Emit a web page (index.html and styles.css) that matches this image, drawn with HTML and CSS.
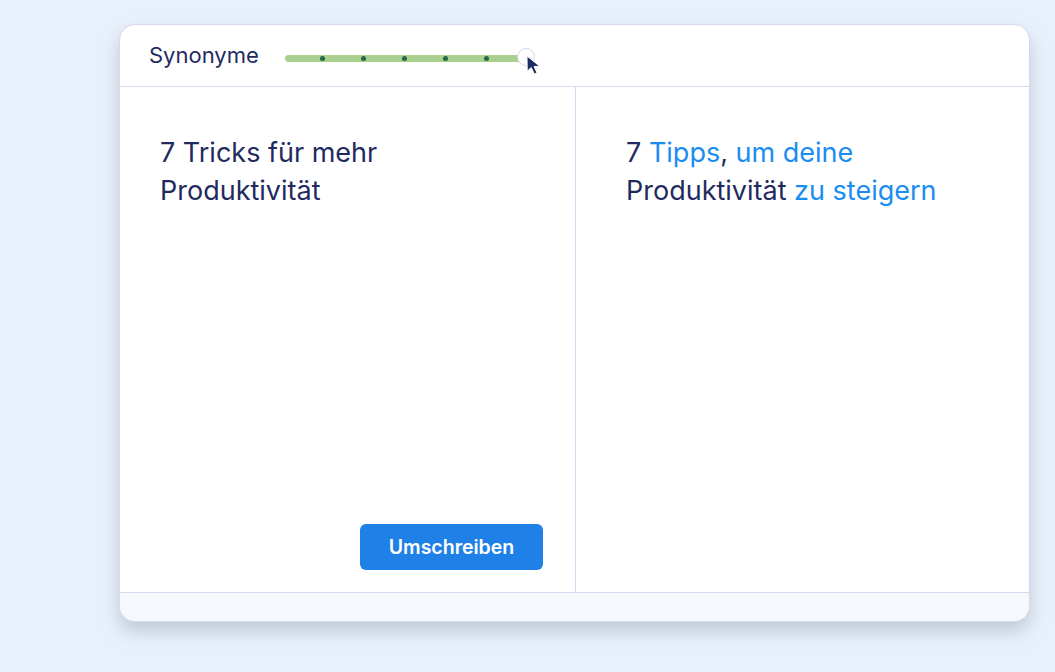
FILE: index.html
```html
<!DOCTYPE html>
<html lang="de">
<head>
<meta charset="utf-8">
<link rel="stylesheet" href="styles.css">
</head>
<body>
<div class="card">
  <div class="header">
    <span class="label">Synonyme</span>
    <div class="slider">
      <div class="track">
        <span class="dot"></span><span class="dot"></span><span class="dot"></span><span class="dot"></span><span class="dot"></span>
      </div>
      <span class="thumb"></span>
      <svg class="cursor" width="16" height="20" viewBox="0 0 16 20"><path d="M1 1 L1.2 16.2 L5.2 12.6 L8.3 19 L11 17.7 L8 11.5 L13.8 11.3 Z" fill="#1d2b63" stroke="#fff" stroke-width="1" stroke-linejoin="round"/></svg>
    </div>
  </div>
  <div class="body">
    <div class="col left">
      <p class="title">7 Tricks für mehr Produktivität</p>
      <button class="btn">Umschreiben</button>
    </div>
    <div class="col right">
      <p class="title">7 <span class="hl">Tipps</span>, <span class="hl">um deine</span> Produktivität <span class="hl">zu steigern</span></p>
    </div>
  </div>
  <div class="footer"></div>
</div>
</body>
</html>
```
FILE: styles.css
```css
* { box-sizing: border-box; }
body {
  margin: 0;
  background: #e8f1fb;
  font-family: Inter, "Noto Sans", sans-serif;
  width: 1055px;
  height: 672px;
  overflow: hidden;
}
.card {
  margin: 24px 0 0 119px;
  width: 911px;
  height: 598px;
  background: #fff;
  border: 1px solid #d6d9ee;
  border-radius: 16px;
  overflow: hidden;
  display: flex;
  flex-direction: column;
  box-shadow: 0 10px 18px rgba(120, 130, 150, 0.35);
}
.header {
  height: 62px;
  border-bottom: 1px solid #d6d9ee;
  display: flex;
  align-items: center;
  padding: 0 0 0 29px;
  flex-shrink: 0;
}
.label {
  font-size: 22px;
  color: #1f2b5f;
  margin-right: 26px;
  position: relative;
  top: -1px;
}
.slider {
  position: relative;
  width: 260px;
  height: 20px;
  display: flex;
  align-items: center;
  top: 2px;
}
.track {
  width: 241px;
  height: 7px;
  border-radius: 4px;
  background: #a9d08e;
  display: flex;
  align-items: center;
  gap: 36px;
  padding-left: 35.5px;
  position: relative;
  top: 1px;
}
.dot {
  width: 5px;
  height: 5px;
  border-radius: 50%;
  background: #24694a;
  flex-shrink: 0;
}
.thumb {
  position: absolute;
  left: 232px;
  top: 0px;
  width: 18px;
  height: 18px;
  border-radius: 50%;
  background: #fff;
  border: 1px solid #d3d7e8;
}
.cursor {
  position: absolute;
  left: 241px;
  top: 7px;
}
.body {
  flex: 1;
  display: flex;
}
.col {
  flex: 1;
  position: relative;
  display: flex;
  flex-direction: column;
}
.left {
  border-right: 1px solid #d6d9ee;
  padding: 47px 32px 22px 40px;
  width: 456px;
  flex: none;
}
.right {
  padding: 47px 40px 22px 50px;
}
.title {
  margin: 0;
  font-size: 27px;
  line-height: 38px;
  color: #1f2b5f;
  max-width: 345px;
}
.hl { color: #1a8cf2; }
.btn {
  margin-top: auto;
  align-self: flex-end;
  width: 183px;
  height: 46px;
  border: none;
  border-radius: 6px;
  background: #1f80e8;
  color: #fff;
  font-family: Inter, sans-serif;
  font-size: 19.5px;
  font-weight: 600;
}
.footer {
  height: 29px;
  border-top: 1px solid #d6d9ee;
  background: #f5f8fd;
  flex-shrink: 0;
}
```
